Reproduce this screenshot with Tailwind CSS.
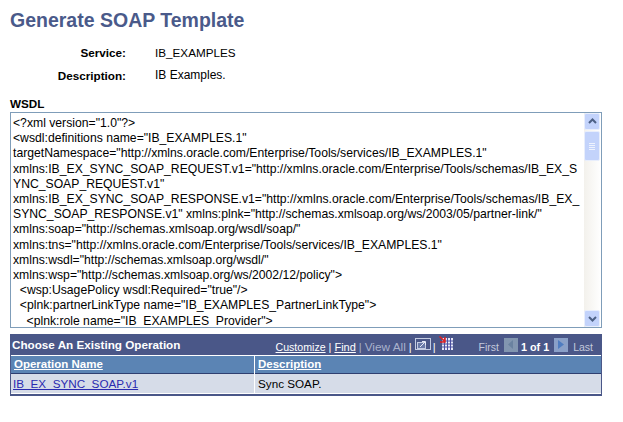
<!DOCTYPE html>
<html lang="en">
<head>
<meta charset="UTF-8">
<title>Generate SOAP Template</title>
<script src="https://cdn.jsdelivr.net/npm/@tailwindcss/browser@4"></script>
</head>
<body class="bg-white font-['Liberation_Sans',Arial,sans-serif] text-[12px] text-black overflow-hidden">
<div class="pl-[10px] pt-[9px] w-[602px]">
  <!-- Page title -->
  <h1 class="text-[19.5px] leading-[23px] font-bold text-[#4a5a8a]">Generate SOAP Template</h1>

  <!-- Service info -->
  <div class="mt-[13px] grid grid-cols-[116px_1fr] gap-x-[29px] gap-y-[8px] leading-[15px] text-[11.7px]">
    <div class="font-bold text-right">Service:</div>
    <div>IB_EXAMPLES</div>
    <div class="font-bold text-right">Description:</div>
    <div class="text-[12px]">IB Examples.</div>
  </div>

  <div class="mt-[14px] font-bold leading-[14px] text-[11.7px]">WSDL</div>

  <!-- WSDL box -->
  <div class="mt-[1px] flex w-[592px] h-[216px] border border-[#7f9db9]">
    <div class="flex-1 overflow-hidden pl-[2px] pt-[3px] leading-[15.2px] whitespace-pre text-[12.2px]">&lt;?xml version="1.0"?&gt;
&lt;wsdl:definitions name="IB_EXAMPLES.1"
targetNamespace="http://xmlns.oracle.com/Enterprise/Tools/services/IB_EXAMPLES.1"
xmlns:IB_EX_SYNC_SOAP_REQUEST.v1="http://xmlns.oracle.com/Enterprise/Tools/schemas/IB_EX_S
YNC_SOAP_REQUEST.v1"
xmlns:IB_EX_SYNC_SOAP_RESPONSE.v1="http://xmlns.oracle.com/Enterprise/Tools/schemas/IB_EX_
SYNC_SOAP_RESPONSE.v1" xmlns:plnk="http://schemas.xmlsoap.org/ws/2003/05/partner-link/"
xmlns:soap="http://schemas.xmlsoap.org/wsdl/soap/"
xmlns:tns="http://xmlns.oracle.com/Enterprise/Tools/services/IB_EXAMPLES.1"
xmlns:wsdl="http://schemas.xmlsoap.org/wsdl/"
xmlns:wsp="http://schemas.xmlsoap.org/ws/2002/12/policy"&gt;
  &lt;wsp:UsagePolicy wsdl:Required="true"/&gt;
  &lt;plnk:partnerLinkType name="IB_EXAMPLES_PartnerLinkType"&gt;
    &lt;plnk:role name="IB_EXAMPLES_Provider"&gt;</div>
    <!-- Scrollbar -->
    <div class="w-[16px] mr-px flex flex-col bg-gradient-to-r from-[#f3f1ec] to-[#fefefe]">
      <div class="h-[17px] flex items-center justify-center bg-[#c3d3fb] border border-[#e8eefc] rounded-[2px]">
        <svg width="9" height="7" viewBox="0 0 9 7"><path d="M1 5l3.500-3.500L8 5" fill="none" stroke="#4d6185" stroke-width="2"/></svg>
      </div>
      <div class="mt-px h-[30px] flex flex-col items-center justify-center gap-px bg-[#c3d3fb] border border-[#e8eefc] rounded-[2px]">
        <div class="w-[6px] h-px bg-[#eef3fe]"></div>
        <div class="w-[6px] h-px bg-[#eef3fe]"></div>
        <div class="w-[6px] h-px bg-[#eef3fe]"></div>
        <div class="w-[6px] h-px bg-[#eef3fe]"></div>
      </div>
      <div class="flex-1"></div>
      <div class="h-[17px] flex items-center justify-center bg-[#c3d3fb] border border-[#e8eefc] rounded-[2px]">
        <svg width="9" height="7" viewBox="0 0 9 7"><path d="M1 2l3.500 3.500L8 2" fill="none" stroke="#4d6185" stroke-width="2"/></svg>
      </div>
    </div>
  </div>

  <!-- Operations grid -->
  <div class="mt-[6px] w-[592px] border border-[#4a5788] bg-[#4a5788] border-t-0 border-b-[2px] border-b-[#4a5788]">
    <div class="h-[21px] flex items-center pl-[1px] pr-[8px] text-white">
      <div class="font-bold flex-1 text-[11.7px]">Choose An Existing Operation</div>
      <div class="flex items-center text-[11px] leading-[13px] mt-[5px]">
        <span class="underline text-[10.6px]">Customize</span>
        <span class="mx-[3px]">|</span>
        <span class="underline">Find</span>
        <span class="mx-[3px] text-[#a9b2cc]">|</span>
        <span class="text-[#a9b2cc] text-[11.8px]">View All</span>
        <span class="ml-[3px] mr-[3px]">|</span>
        <!-- zoom icon -->
        <svg class="-mt-[5px]" width="16" height="13" viewBox="0 0 16 13"><rect x="0.500" y="0.500" width="15" height="11" fill="none" stroke="#c4cce2"/><rect x="2.500" y="4.500" width="8" height="6" fill="#6a7aa8" stroke="#c4cce2"/><path d="M5 9l5-5M7 3.500h3.500V7" fill="none" stroke="#e6eaf6"/></svg>
        <span class="ml-[2px] mr-[3px]">|</span>
        <!-- download grid icon -->
        <svg class="-mt-[8px]" width="14" height="15" viewBox="0 0 14 15"><rect x="3" y="2" width="11" height="12" fill="#e6e9f6"/><path d="M3 5h11M3 8h11M3 11h11M5.500 2v12M8.500 2v12M11.500 2v12" stroke="#4a4fa0"/><path d="M0.500 0.500l5 4.500M6 1v5H1" fill="none" stroke="#e02020" stroke-width="1.500"/></svg>
        <span class="ml-[26px] text-[#c3c9dc] text-[10.5px]">First</span>
        <div class="ml-[5px] -mt-[5px] w-[14px] h-[14px] bg-[#8296b0] flex items-center justify-center"><svg width="6" height="9" viewBox="0 0 6 9"><path d="M5 0v9L0 4.500z" fill="#6a82a0"/></svg></div>
        <span class="mx-[5px] ml-[3px] font-bold text-[10.8px]">1 of 1</span>
        <div class="-mt-[5px] w-[14px] h-[14px] bg-[#8aa0c8] flex items-center justify-center"><svg width="6" height="9" viewBox="0 0 6 9"><path d="M0 0v9l6-4.500z" fill="#4f7cc0"/></svg></div>
        <span class="ml-[5px] text-[#c3c9dc] text-[10.5px]">Last</span>
      </div>
    </div>
    <div class="bg-white pt-px">
      <div class="grid grid-cols-[243px_1fr] gap-x-px bg-white">
        <div class="h-[18px] bg-[#5b84b4] border-b border-[#2f3f70] text-white font-bold underline pl-[3px] leading-[16px] text-[11.5px]">Operation Name</div>
        <div class="h-[18px] bg-[#5b84b4] border-b border-[#2f3f70] text-white font-bold underline pl-[3px] leading-[16px] text-[11.5px]">Description</div>
      </div>
      <div class="grid grid-cols-[243px_1fr] gap-x-px bg-white border-b border-white text-[11.7px]">
        <div class="h-[19px] bg-[#d6dce8] pl-[2px] leading-[19px] text-[#2a2ab0] underline">IB_EX_SYNC_SOAP.v1</div>
        <div class="h-[19px] bg-[#d6dce8] pl-[3px] leading-[19px]">Sync SOAP.</div>
      </div>
    </div>
  </div>
</div>
</body>
</html>
